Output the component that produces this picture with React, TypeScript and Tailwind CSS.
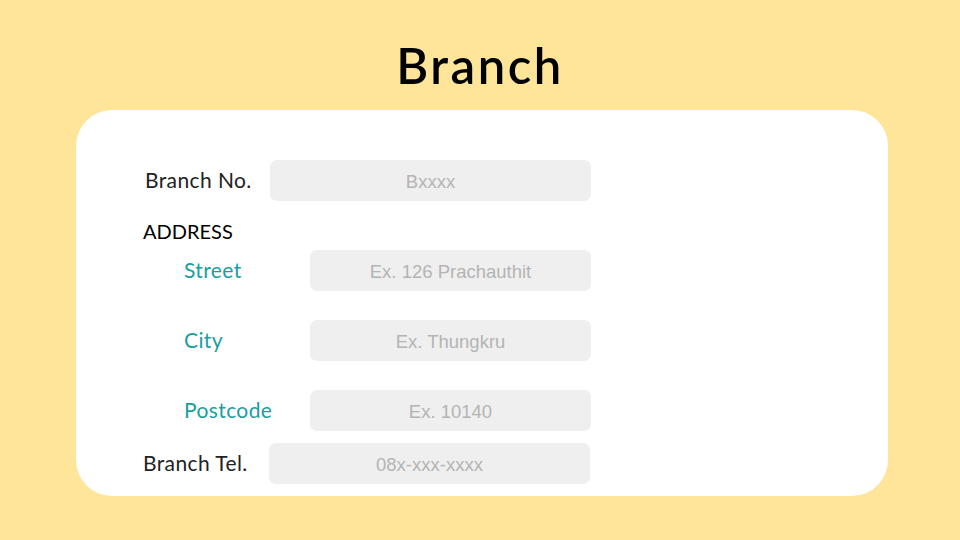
import React from "react";

const font = { fontFamily: '"Lato", "Noto Sans", sans-serif' };
const phFont = { fontFamily: '"Liberation Sans", Arial, sans-serif' };

function Input({ w, text }: { w: string; text: string }) {
  return (
    <div
      className={`${w} h-[41px] rounded-[7px] bg-[#efefef] flex items-center justify-center pt-[3px] text-[18.5px] text-[#b4b4b4]`}
      style={phFont}
    >
      {text}
    </div>
  );
}

function Field({ label, placeholder }: { label: string; placeholder: string }) {
  return (
    <div className="flex items-center h-[41px] pl-[108px]">
      <div className="w-[126px] shrink-0 pb-[2px] text-[21px] tracking-[0.4px] text-[#17a0a0]" style={font}>
        {label}
      </div>
      <Input w="w-[281px]" text={placeholder} />
    </div>
  );
}

export default function App() {
  return (
    <div className="w-[960px] h-[540px] bg-[#ffe599] flex flex-col overflow-hidden">
      <div className="h-[110px] flex items-center justify-center pt-[22px]">
        <h1 className="text-[49px] font-semibold text-black tracking-[2.5px]" style={font}>
          Branch
        </h1>
      </div>
      <div className="ml-[76px] w-[812px] h-[386px] bg-white rounded-[36px] pt-[50px]">
        <div className="flex items-center h-[41px] pl-[69px]">
          <div className="w-[125px] shrink-0 pb-[2px] text-[21px] tracking-[0.4px] text-[#222222]" style={font}>
            Branch No.
          </div>
          <Input w="w-[321px]" text="Bxxxx" />
        </div>
        <div className="h-[49px] flex items-center pt-[10px] pl-[67px] text-[20px] text-black" style={font}>
          ADDRESS
        </div>
        <Field label="Street" placeholder="Ex. 126 Prachauthit" />
        <div className="h-[29px]" />
        <Field label="City" placeholder="Ex. Thungkru" />
        <div className="h-[29px]" />
        <Field label="Postcode" placeholder="Ex. 10140" />
        <div className="h-[12px]" />
        <div className="flex items-center h-[41px] pl-[67px]">
          <div className="w-[126px] shrink-0 pb-[2px] text-[21px] tracking-[0.4px] text-[#222222]" style={font}>
            Branch Tel.
          </div>
          <Input w="w-[321px]" text="08x-xxx-xxxx" />
        </div>
      </div>
    </div>
  );
}
